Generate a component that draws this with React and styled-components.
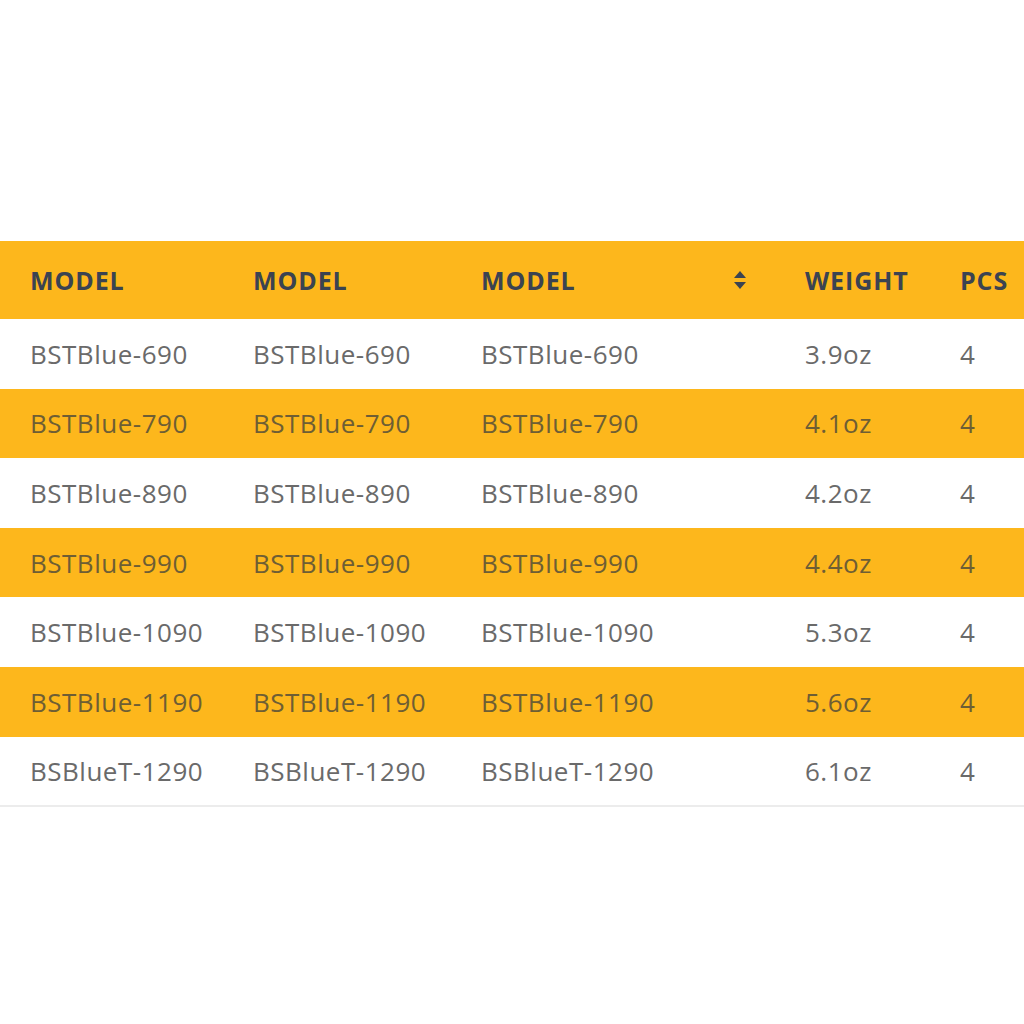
import React from 'react';
import styled, { createGlobalStyle } from 'styled-components';

const GlobalStyle = createGlobalStyle`
  html, body {
    margin: 0;
    padding: 0;
    background: #ffffff;
    overflow: hidden;
  }
`;

const Page = styled.div`
  width: 1024px;
  height: 1024px;
  padding-top: 241px;
  box-sizing: border-box;
  overflow: hidden;
  font-family: "Open Sans", "Liberation Sans", sans-serif;
`;

const Table = styled.table`
  width: 1080px;
  border-collapse: collapse;
  table-layout: fixed;
`;

const HeadRow = styled.tr`
  background: #fdb71c;
  height: 78px;
`;

const HeadCell = styled.th`
  text-align: left;
  padding: 0 0 0 30px;
  font-size: 25px;
  font-weight: 700;
  color: #3b4351;
  letter-spacing: 0.9px;
  width: ${(p) => p.$w}px;
  box-sizing: border-box;
`;

const HeadInner = styled.div`
  display: flex;
  align-items: center;
  justify-content: space-between;
  padding-right: 28px;
`;

const Row = styled.tr`
  background: ${(p) => (p.$alt ? '#fdb71c' : '#ffffff')};
  height: 69.6px;
  border-bottom: ${(p) => (p.$last ? '2px solid #ececec' : 'none')};
`;

const Cell = styled.td`
  padding: 0 0 0 30px;
  font-size: 26px;
  letter-spacing: 0.5px;
  color: ${(p) => (p.$alt ? '#6e5e34' : '#6a6a6a')};
  white-space: nowrap;
`;

const SortIcon = () => (
  <svg width="14" height="20" viewBox="0 0 14 20">
    <path d="M7 1 L13 8 H1 Z" fill="#3b4351" />
    <path d="M7 19 L13 12 H1 Z" fill="#3b4351" />
  </svg>
);

const rows = [
  ['BSTBlue-690', '3.9oz', '4'],
  ['BSTBlue-790', '4.1oz', '4'],
  ['BSTBlue-890', '4.2oz', '4'],
  ['BSTBlue-990', '4.4oz', '4'],
  ['BSTBlue-1090', '5.3oz', '4'],
  ['BSTBlue-1190', '5.6oz', '4'],
  ['BSBlueT-1290', '6.1oz', '4'],
];

export default function App() {
  return (
    <Page>
      <GlobalStyle />
      <Table>
        <thead>
          <HeadRow>
            <HeadCell $w={223}>MODEL</HeadCell>
            <HeadCell $w={228}>MODEL</HeadCell>
            <HeadCell $w={324}>
              <HeadInner>
                <span>MODEL</span>
                <SortIcon />
              </HeadInner>
            </HeadCell>
            <HeadCell $w={155}>WEIGHT</HeadCell>
            <HeadCell $w={150}>PCS</HeadCell>
          </HeadRow>
        </thead>
        <tbody>
          {rows.map(([model, weight, pcs], i) => {
            const alt = i % 2 === 1;
            return (
              <Row key={i} $alt={alt} $last={i === rows.length - 1}>
                <Cell $alt={alt}>{model}</Cell>
                <Cell $alt={alt}>{model}</Cell>
                <Cell $alt={alt}>{model}</Cell>
                <Cell $alt={alt}>{weight}</Cell>
                <Cell $alt={alt}>{pcs}</Cell>
              </Row>
            );
          })}
        </tbody>
      </Table>
    </Page>
  );
}
